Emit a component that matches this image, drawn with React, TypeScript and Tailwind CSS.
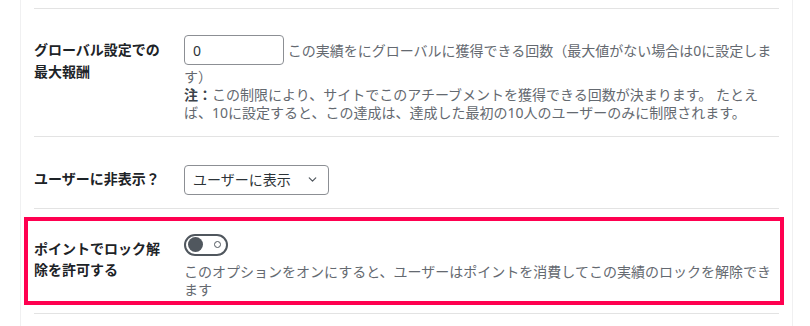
import { ChevronDown } from "lucide-react";

const font = {
  fontFamily: '"Noto Sans", "Noto Sans CJK JP", sans-serif',
};

export default function App() {
  return (
    <div
      className="w-[810px] h-[326px] overflow-hidden bg-white pl-[20px] text-[14px] text-[#1d2327]"
      style={font}
    >
      <div className="w-[773px] h-full border-x border-[#f0f0f1] px-[13px] pt-[8px]">
        {/* max reward */}
        <div className="flex border-t border-[#e3e3e3] pt-[26px] pb-[14px]">
          <div className="w-[150px] shrink-0 pr-[20px] pt-[4px] font-bold leading-[22px]">
            グローバル設定での最大報酬
          </div>
          <div className="flex-1 pr-[1px] text-[#646970]">
            <div className="leading-[19px]">
              <span className="inline-flex h-[30px] w-[100px] items-center rounded-[4px] border border-[#8c8f94] px-[8px] align-middle text-[#2c3338]">
                0
              </span>{" "}
              <span className="align-middle">
                この実績をにグローバルに獲得できる回数（最大値がない場合は0に設定します）
              </span>
            </div>
            <p className="leading-[18px]">
              <b className="text-[#3c434a]">注：</b>
              この制限により、サイトでこのアチーブメントを獲得できる回数が決まります。
              たとえば、10に設定すると、この達成は、達成した最初の10人のユーザーのみに制限されます。
            </p>
          </div>
        </div>

        {/* hide from users */}
        <div className="flex border-t border-[#e3e3e3] pt-[28px] pb-[13px]">
          <div className="w-[150px] shrink-0 pr-[20px] pt-[3px] font-bold leading-[22px]">
            ユーザーに非表示？
          </div>
          <div className="flex-1">
            <div className="flex h-[30px] w-[145px] items-center justify-between rounded-[4px] border border-[#8c8f94] pl-[8px] pr-[9px] text-[#2c3338]">
              <span>ユーザーに表示</span>
              <ChevronDown className="size-[13px] text-[#50575e]" strokeWidth={2.25} />
            </div>
          </div>
        </div>

        {/* unlock with points (highlighted) */}
        <div className="border-t border-b border-[#e3e3e3] py-[8px]">
          <div className="-ml-[10px] -mr-[5px] flex border-[4px] border-[#ff0050] pl-[6px] pt-[13px] pb-[2px]">
            <div className="w-[150px] shrink-0 pr-[20px] pt-[4px] font-bold leading-[21px]">
              ポイントでロック解除を許可する
            </div>
            <div className="flex-1 pr-[1px]">
              <div className="relative h-[22px] w-[44px] rounded-full border-2 border-[#50575e]">
                <span className="absolute left-[2px] top-[1.5px] size-[15px] rounded-full bg-[#50575e]" />
                <span className="absolute right-[5px] top-[5.5px] size-[7px] rounded-full border-[1.5px] border-[#50575e]" />
              </div>
              <p className="mt-[7px] leading-[18px] text-[#646970]">
                このオプションをオンにすると、ユーザーはポイントを消費してこの実績のロックを解除できます
              </p>
            </div>
          </div>
        </div>
      </div>
    </div>
  );
}
